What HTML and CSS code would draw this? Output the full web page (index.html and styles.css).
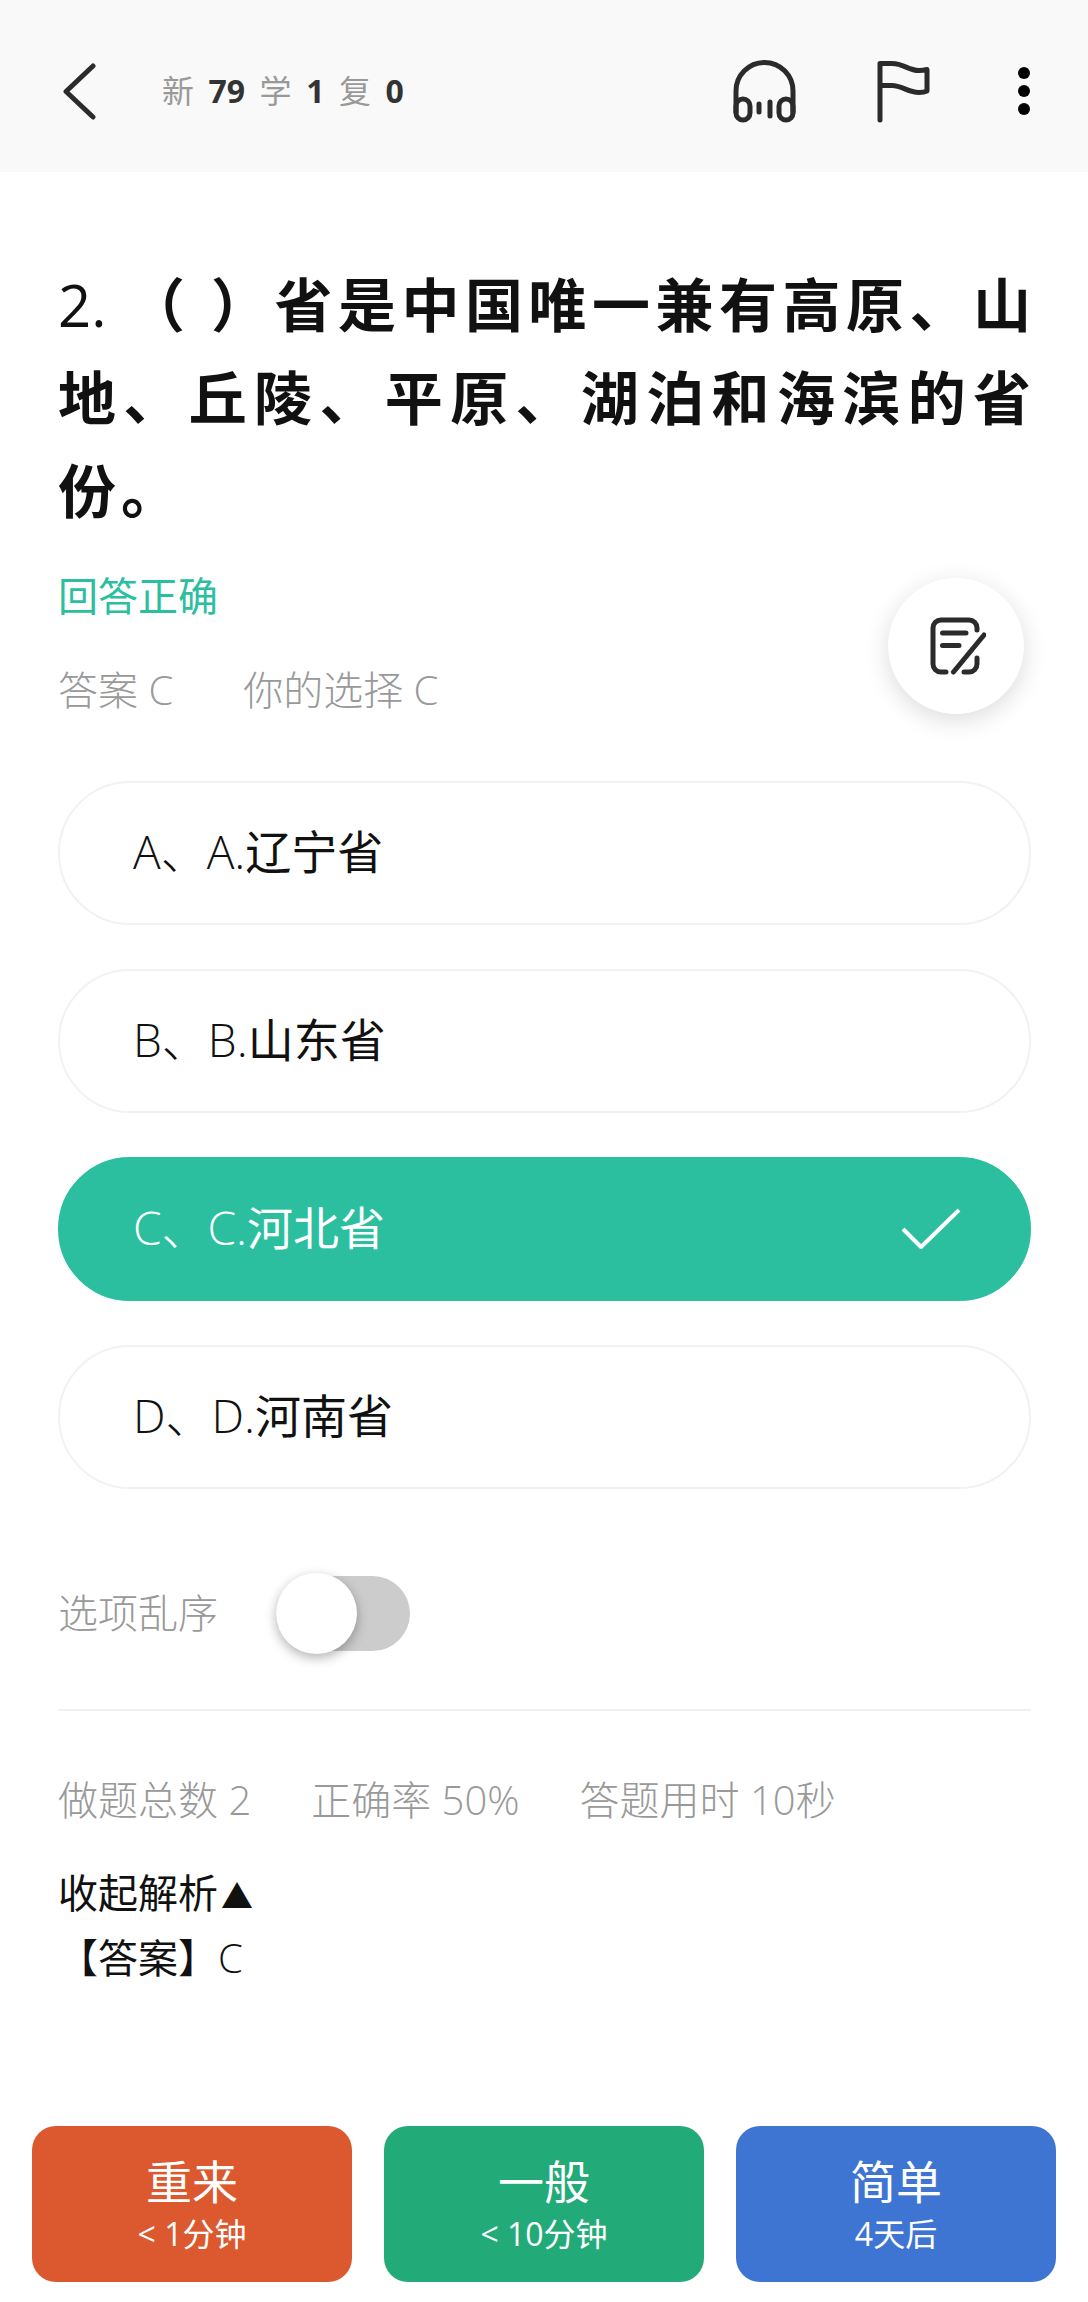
FILE: index.html
```html
<!DOCTYPE html>
<html lang="zh-CN">
<head>
  <meta charset="UTF-8" />
  <meta name="viewport" content="width=device-width, initial-scale=1.0" />
  <title>答题</title>
  <link rel="stylesheet" href="styles.css">
</head>
<body>
  <header class="topbar">
    <svg class="back" width="34" height="57" viewBox="0 0 34 57">
      <path d="M31 3 L4 28.5 L31 54" />
    </svg>
    <div class="counts">
      <span>新</span><b>79</b><span>学</span><b>1</b><span>复</span><b>0</b>
    </div>
    <div class="tools">
      <svg class="ico-phones" width="63" height="63" viewBox="0 0 63 63">
        <path d="M3 52V31a28.5 28.5 0 0 1 57 0V52" />
        <path d="M3 46a7 7 0 0 1 14 0V53a7 7 0 0 1-14 0Z" />
        <path d="M46 46a7 7 0 0 1 14 0V53a7 7 0 0 1-14 0Z" />
        <path d="M26 44V52M37 42V56" />
      </svg>
      <svg class="ico-flag" width="53" height="63" viewBox="0 0 53 63">
        <path d="M3 60V3.5h12c12 0 16 7 27 7 3 0 6-.5 8-1V31c-2 1-4 1.5-8 1.5-11 0-17-7-27-7H3" />
      </svg>
      <div class="dots"><i></i><i></i><i></i></div>
    </div>
  </header>

  <main class="content">
    <h1 class="question">
      <span class="qline"><span class="qnum">2.</span> （ ）省是中国唯一兼有高原、山</span>
      <span class="qline">地、丘陵、平原、湖泊和海滨的省</span>
      <span class="qlast">份。</span>
    </h1>
    <div class="result">回答正确</div>
    <div class="answer-row">
      <span>答案 C</span>
      <span>你的选择 C</span>
    </div>

    <div class="options">
      <div class="option">A、A.<em>辽宁省</em></div>
      <div class="option">B、B.<em>山东省</em></div>
      <div class="option selected">C、C.<em>河北省</em>
        <svg class="check" width="60" height="42" viewBox="0 0 60 42">
          <path d="M2 21 L20 39 L58 2" />
        </svg>
      </div>
      <div class="option">D、D.<em>河南省</em></div>
    </div>

    <div class="shuffle">
      <span>选项乱序</span>
      <div class="switch"><div class="knob"></div></div>
    </div>

    <div class="stats">
      <span>做题总数 2</span>
      <span>正确率 50%</span>
      <span>答题用时 10秒</span>
    </div>

    <div class="explain"><em>收起解析</em><span class="arrow">▲</span></div>
    <div class="explain"><em>【答案】</em>C</div>
  </main>

  <footer class="grades">
    <div class="grade again"><strong>重来</strong><small>&lt; 1分钟</small></div>
    <div class="grade good"><strong>一般</strong><small>&lt; 10分钟</small></div>
    <div class="grade easy"><strong>简单</strong><small>4天后</small></div>
  </footer>

  <div class="fab">
    <svg width="56" height="58" viewBox="0 0 56 58">
      <path d="M16 55H11a8 8 0 0 1-8-8V11a8 8 0 0 1 8-8H39a8 8 0 0 1 8 8V13" />
      <path d="M47 41V47a8 8 0 0 1-8 8H34" />
      <path d="M12.500 16H36M12.500 28.500H29M23.500 55L54 18" />
    </svg>
  </div>
</body>
</html>
```

FILE: styles.css
```css
* {
  box-sizing: border-box;
}
body {
  margin: 0;
  width: 1088px;
  height: 2302px;
  position: relative;
  display: flex;
  flex-direction: column;
  background: #fff;
  color: #111;
  font-family: 'Open Sans', 'Noto Sans CJK SC', sans-serif;
  font-weight: 300;
  font-size: 40px;
  line-height: 60px;
}
svg path {
  fill: none;
  stroke: #2b2b2b;
  stroke-width: 5;
  stroke-linecap: round;
  stroke-linejoin: round;
}
em {
  font-style: normal;
  font-weight: 400;
}

/* top bar */
.topbar {
  height: 172px;
  flex: none;
  background: #f9f9f9;
  display: flex;
  align-items: center;
  padding: 10px 0 0 62px;
}
.counts {
  margin-left: 66px;
  display: flex;
  gap: 14.5px;
  font-size: 32px;
  color: #999;
  font-weight: 400;
}
.counts b {
  color: #333;
  font-weight: 700;
}
.tools {
  margin-left: auto;
  display: flex;
  align-items: center;
}
.ico-phones {
  margin-right: 81px;
}
.ico-flag {
  margin-right: 88px;
}
.dots {
  width: 12px;
  margin-right: 58px;
  display: flex;
  flex-direction: column;
  gap: 6px;
}
.dots i {
  display: block;
  width: 12px;
  height: 12px;
  border-radius: 50%;
  background: #000;
}

/* question */
.content {
  padding: 86px 57px 0 58px;
}
.question {
  margin: 0 -5px 0 0;
  font-size: 58px;
  line-height: 93px;
  font-weight: 700;
  letter-spacing: 5px;
  color: #111;
}
.qline {
  display: block;
  text-align: justify;
  text-align-last: justify;
}
.qlast {
  display: block;
}
.qnum {
  font-weight: 400;
  letter-spacing: 0;
}
.result {
  margin-top: 29px;
  color: #2bbf9f;
  font-weight: 400;
}
.answer-row {
  margin-top: 34px;
  display: flex;
  gap: 70px;
  color: #999;
}

/* options */
.options {
  margin-top: 61px;
  display: flex;
  flex-direction: column;
  gap: 44px;
}
.option {
  height: 144px;
  border: 2px solid #f2f2f2;
  border-radius: 72px;
  padding: 0 68px 5px 73px;
  display: flex;
  align-items: center;
  font-size: 46px;
}
.option.selected {
  background: #2bbf9f;
  border-color: #2bbf9f;
  color: #fff;
}
.check {
  margin-left: auto;
  margin-top: 5px;
}
.check path {
  stroke: #fff;
  stroke-width: 4;
  stroke-linecap: butt;
}

/* shuffle switch */
.shuffle {
  margin-top: 83px;
  display: flex;
  align-items: center;
  color: #999;
  padding-bottom: 55px;
  height: 139px;
  border-bottom: 2px solid #f0f0f0;
}
.switch {
  position: relative;
  width: 134px;
  height: 75px;
  margin-left: 58px;
  border-radius: 38px;
  background: #ccc;
}
.knob {
  position: absolute;
  left: 0;
  top: -3px;
  width: 81px;
  height: 81px;
  border-radius: 50%;
  background: #fff;
  box-shadow: 0 4px 12px rgba(0,0,0,0.3);
}

.stats {
  margin-top: 59px;
  display: flex;
  gap: 60px;
  color: #999;
}
.explain {
  color: #111;
  margin-top: 2px;
}
.stats + .explain {
  margin-top: 33px;
}
.arrow {
  font-size: 32px;
  font-weight: 400;
  margin-left: 3px;
}

/* bottom buttons */
.grades {
  margin-top: auto;
  padding: 0 32px 20px;
  display: flex;
  gap: 32px;
}
.grade {
  flex: 1;
  height: 156px;
  padding-bottom: 1px;
  border-radius: 24px;
  color: #fff;
  display: flex;
  flex-direction: column;
  align-items: center;
  justify-content: center;
  font-weight: 400;
}
.grade strong {
  font-size: 46px;
  line-height: 60px;
  font-weight: 400;
}
.grade small {
  font-size: 32px;
  line-height: 46px;
}
.again {
  background: #dc582e;
}
.good {
  background: #22ab78;
}
.easy {
  background: #3e75d2;
}

/* floating note button */
.fab {
  position: absolute;
  left: 888px;
  top: 578px;
  width: 136px;
  height: 136px;
  border-radius: 50%;
  background: #fff;
  box-shadow: 0 6px 24px rgba(0,0,0,0.14);
  display: flex;
  align-items: center;
  justify-content: center;
}
.fab svg {
  margin-left: 3px;
}
```
